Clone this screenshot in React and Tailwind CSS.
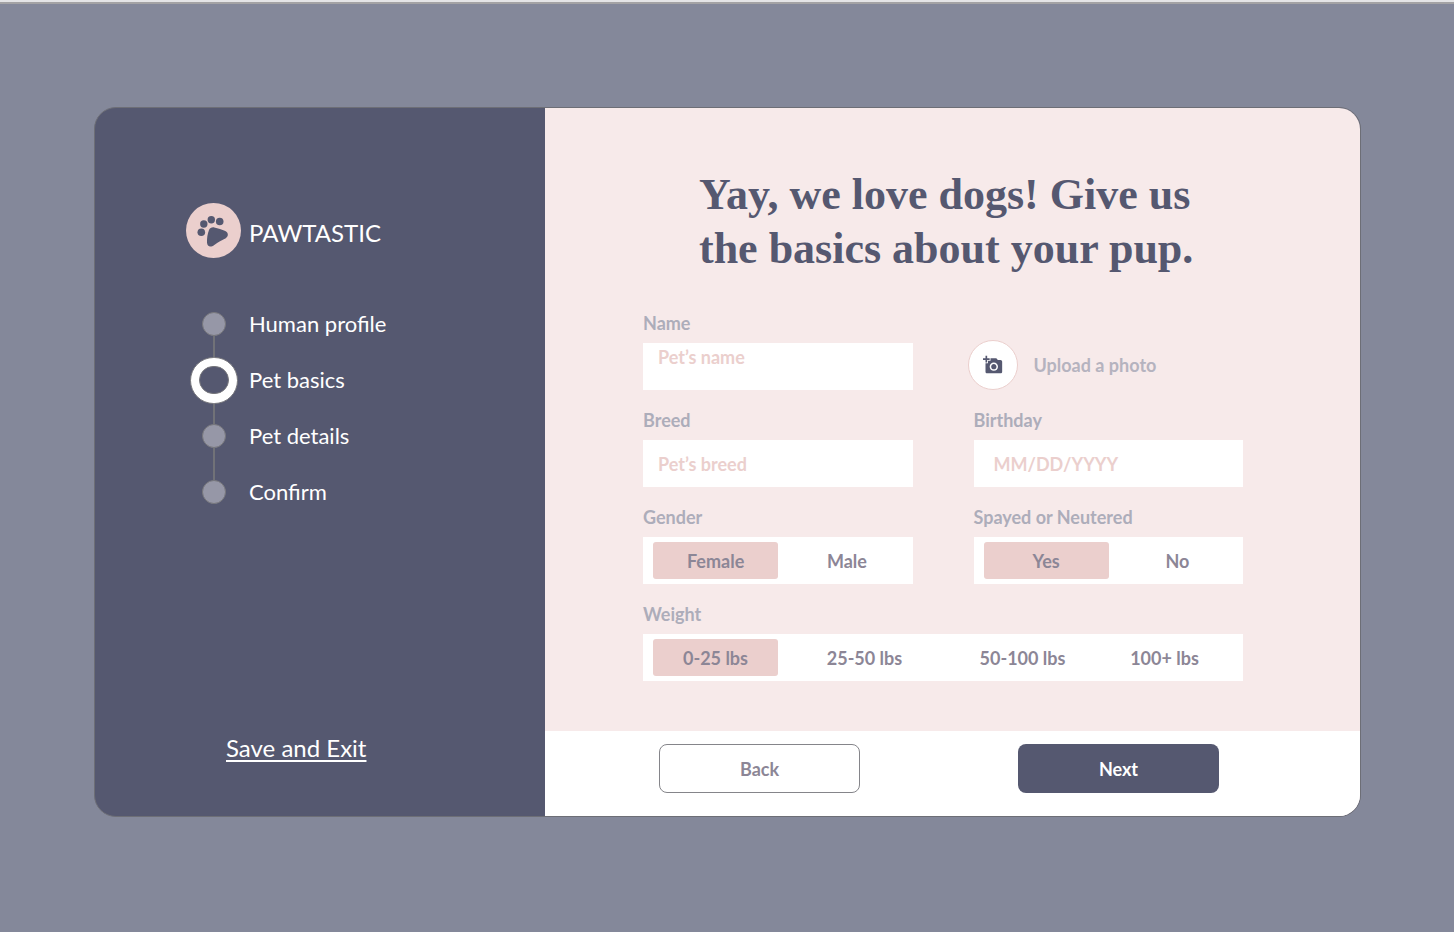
import { useState } from "react";
import { MdAddAPhoto } from "react-icons/md";

const steps = [
  { label: "Human profile" },
  { label: "Pet basics", active: true },
  { label: "Pet details" },
  { label: "Confirm" },
];

const labelStyle = "mb-2 block text-lg leading-6 font-bold text-[#adadba]";
const inputStyle =
  "block h-[47px] w-full bg-white text-lg leading-6 font-bold text-[#555870] outline-none placeholder:text-[#ebcfcd] placeholder:opacity-100";

function PawLogo() {
  return (
    <svg viewBox="0 0 55 55" className="size-[55px] shrink-0" aria-hidden="true">
      <circle cx="27.5" cy="27.5" r="27.5" fill="#ebcfcd" />
      <g fill="#555870">
        <circle cx="15.3" cy="29.2" r="3.8" />
        <circle cx="17.8" cy="21" r="3.7" />
        <circle cx="25.3" cy="16.8" r="3.7" />
        <circle cx="33.7" cy="18.5" r="3.8" />
        <path d="M21 39.5C20.9 35 21.5 31 23 27C23.9 24.8 26 24 28.3 24.4C32 25.1 36 26.5 39.3 28.1C42.6 29.8 42.7 33.4 39.8 35.2C36 37.2 32 39.2 28.3 42C24.6 44.8 21.2 43.8 21 39.5Z" />
      </g>
    </svg>
  );
}

function Step({ label, active, first, last }) {
  return (
    <li className="flex h-14 items-center gap-2" aria-current={active ? "step" : undefined}>
      <span className="flex h-full w-[55px] shrink-0 flex-col items-center">
        <span className={first ? "flex-1" : "w-0.5 flex-1 bg-[#717278]"} />
        {active ? (
          <span className="flex h-[47px] w-12 items-center justify-center rounded-full border border-[#77777c] bg-white">
            <span className="h-7 w-[30px] rounded-full border border-[#77777c] bg-[#555870]" />
          </span>
        ) : (
          <span className="size-6 rounded-full border border-[#77777c] bg-[#9697a7]" />
        )}
        <span className={last ? "flex-1" : "w-0.5 flex-1 bg-[#717278]"} />
      </span>
      <span className="text-[22px] leading-7">{label}</span>
    </li>
  );
}

function Choices({ legend, name, options, columns }) {
  const [value, setValue] = useState(options[0]);
  return (
    <fieldset>
      <legend className={labelStyle}>{legend}</legend>
      <div className={`grid h-[47px] bg-white py-[5px] pl-2.5 ${columns}`}>
        {options.map((option) => (
          <label
            key={option}
            className={`relative flex cursor-pointer items-center justify-center rounded-[3px] text-lg leading-6 font-bold whitespace-nowrap text-[#8c8696] ${
              value === option ? "bg-[#ebcfcd]" : ""
            }`}
          >
            <input
              type="radio"
              name={name}
              value={option}
              checked={value === option}
              onChange={() => setValue(option)}
              className="sr-only"
            />
            {option}
          </label>
        ))}
      </div>
    </fieldset>
  );
}

export default function App() {
  return (
    <div className="min-h-screen border-t-2 border-[#e4e4e6] bg-[#84889a] font-['Lato','Open_Sans',sans-serif]">
      <div className="h-0.5 bg-[#a3a2a4]" />
      <div className="mt-[103px] mr-[93px] ml-[94px] flex overflow-hidden rounded-[22px] border border-[#6d6e76] bg-[#555870]">
        <aside className="flex w-[450px] shrink-0 flex-col pt-[95px] pb-[52px] pl-[91px] text-white">
          <div className="flex items-center gap-2">
            <PawLogo />
            <span className="pt-1 text-2xl leading-8">PAWTASTIC</span>
          </div>
          <ol className="mt-[38px]">
            {steps.map((step, i) => (
              <Step key={step.label} {...step} first={i === 0} last={i === steps.length - 1} />
            ))}
          </ol>
          <a href="#exit" className="mt-auto ml-10 self-start text-2xl leading-8 underline decoration-2 underline-offset-3">
            Save and Exit
          </a>
        </aside>

        <form className="min-w-0 flex-1 bg-[#f7eaea]" onSubmit={(e) => e.preventDefault()}>
          <div className="pt-[60px] pr-[117px] pb-[50px] pl-[98px]">
            <h1 className="ml-14 font-['Liberation_Serif',serif] text-[44px] leading-[54px] font-bold text-[#555870]">
              Yay, we love dogs! Give us
              <br />
              the basics about your pup.
            </h1>

            <div className="mt-[35px] grid grid-cols-2 gap-x-[61px] gap-y-[18px]">
              <div>
                <label htmlFor="pet-name" className={labelStyle}>Name</label>
                <input id="pet-name" placeholder="Pet’s name" className={`${inputStyle} px-[15px] pb-[19px]`} />
              </div>
              <button type="button" className="-ml-1.5 flex items-center gap-4 self-end text-lg leading-6 font-bold text-[#b5b3bf]">
                <span className="flex size-[50px] items-center justify-center rounded-full border border-[#ebcfcd] bg-white">
                  <MdAddAPhoto className="size-5 text-[#555870]" />
                </span>
                Upload a photo
              </button>
              <div>
                <label htmlFor="breed" className={labelStyle}>Breed</label>
                <input id="breed" placeholder="Pet’s breed" className={`${inputStyle} px-[15px]`} />
              </div>
              <div>
                <label htmlFor="birthday" className={labelStyle}>Birthday</label>
                <input id="birthday" placeholder="MM/DD/YYYY" className={`${inputStyle} px-5`} />
              </div>
              <Choices legend="Gender" name="gender" options={["Female", "Male"]} columns="grid-cols-2 gap-1.5 pr-[3px]" />
              <Choices legend="Spayed or Neutered" name="neutered" options={["Yes", "No"]} columns="grid-cols-2 gap-1.5 pr-[3px]" />
              <div className="col-span-2">
                <Choices
                  legend="Weight"
                  name="weight"
                  options={["0-25 lbs", "25-50 lbs", "50-100 lbs", "100+ lbs"]}
                  columns="grid-cols-[125fr_173fr_143fr_141fr] pr-2"
                />
              </div>
            </div>
          </div>

          <div className="flex justify-between bg-white pt-[13px] pr-[141px] pb-[23px] pl-[114px]">
            <button type="button" className="h-[49px] w-[201px] rounded-lg border border-[#85858a] bg-white text-lg leading-6 font-bold text-[#8c8696]">
              Back
            </button>
            <button type="submit" className="h-[49px] w-[201px] rounded-lg bg-[#555870] text-lg leading-6 font-bold text-white">
              Next
            </button>
          </div>
        </form>
      </div>
    </div>
  );
}
